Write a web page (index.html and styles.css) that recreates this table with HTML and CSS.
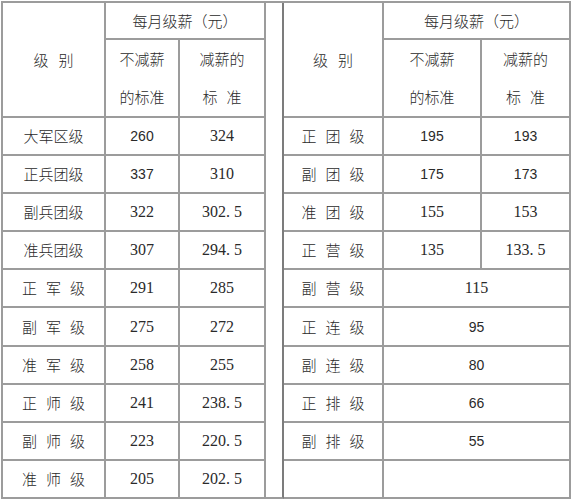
FILE: index.html
```html
<!DOCTYPE html>
<html lang="zh">
<head>
<meta charset="utf-8">
<title>军队级薪标准</title>
<link rel="stylesheet" href="styles.css">
</head>
<body>
<div class="wrap">
<table class="pay">
  <colgroup>
    <col class="c1"><col class="c2"><col class="c3"><col class="cg"><col class="c5"><col class="c6"><col class="c7">
  </colgroup>
  <tr class="r-top">
    <td rowspan="2"><span class="sp10">级别</span></td>
    <td colspan="2" class="h37">每月级薪（元）</td>
    <td rowspan="12" class="gap"></td>
    <td rowspan="2"><span class="sp10">级别</span></td>
    <td colspan="2" class="h37">每月级薪（元）</td>
  </tr>
  <tr class="r-sub">
    <td class="two">不减薪<br>的标准</td>
    <td class="two">减薪的<br><span class="sp9">标准</span></td>
    <td class="two">不减薪<br>的标准</td>
    <td class="two">减薪的<br><span class="sp9">标准</span></td>
  </tr>
  <tr class="row">
    <td>大军区级</td><td class="sn">260</td><td class="mn">324</td>
    <td><span class="sp9">正团级</span></td><td class="sn">195</td><td class="sn">193</td>
  </tr>
  <tr class="row">
    <td>正兵团级</td><td class="sn">337</td><td class="mn">310</td>
    <td><span class="sp9">副团级</span></td><td class="sn">175</td><td class="sn">173</td>
  </tr>
  <tr class="row">
    <td>副兵团级</td><td class="mn">322</td><td class="mn">302<span class="dot">.</span>5</td>
    <td><span class="sp9">准团级</span></td><td class="mn">155</td><td class="mn">153</td>
  </tr>
  <tr class="row">
    <td>准兵团级</td><td class="mn">307</td><td class="mn">294<span class="dot">.</span>5</td>
    <td><span class="sp9">正营级</span></td><td class="mn">135</td><td class="mn">133<span class="dot">.</span>5</td>
  </tr>
  <tr class="row">
    <td><span class="sp9">正军级</span></td><td class="mn">291</td><td class="mn">285</td>
    <td><span class="sp9">副营级</span></td><td colspan="2" class="mn">115</td>
  </tr>
  <tr class="row tall">
    <td><span class="sp9">副军级</span></td><td class="mn">275</td><td class="mn">272</td>
    <td><span class="sp9">正连级</span></td><td colspan="2" class="sn">95</td>
  </tr>
  <tr class="row">
    <td><span class="sp9">准军级</span></td><td class="mn">258</td><td class="mn">255</td>
    <td><span class="sp9">副连级</span></td><td colspan="2" class="sn">80</td>
  </tr>
  <tr class="row">
    <td><span class="sp9">正师级</span></td><td class="mn">241</td><td class="mn">238<span class="dot">.</span>5</td>
    <td><span class="sp9">正排级</span></td><td colspan="2" class="sn">66</td>
  </tr>
  <tr class="row">
    <td><span class="sp9">副师级</span></td><td class="mn">223</td><td class="mn">220<span class="dot">.</span>5</td>
    <td><span class="sp9">副排级</span></td><td colspan="2" class="sn">55</td>
  </tr>
  <tr class="row">
    <td><span class="sp9">准师级</span></td><td class="mn">205</td><td class="mn">202<span class="dot">.</span>5</td>
    <td></td><td colspan="2"></td>
  </tr>
</table>
</div>
</body>
</html>
```

FILE: styles.css
```css
body {
  margin: 0;
  background: #ffffff;
}

.wrap {
  padding: 1px 0 0 1px;
}

.pay {
  border-collapse: separate;
  border-spacing: 0;
  table-layout: fixed;
  width: 570px;
  border-top: 2px solid #9c9c9c;
  border-left: 2px solid #9c9c9c;
  font-family: "Noto Sans CJK SC", "Noto Sans", sans-serif;
  font-weight: 300;
  font-size: 15px;
  color: #2a2a2a;
}

.c1 { width: 103px; }
.c2 { width: 74px; }
.c3 { width: 86px; }
.cg { width: 18px; }
.c5 { width: 100px; }
.c6 { width: 98px; }
.c7 { width: 89px; }

.pay td {
  box-sizing: border-box;
  border-right: 2px solid #9c9c9c;
  border-bottom: 2px solid #9c9c9c;
  padding: 0;
  text-align: center;
  vertical-align: middle;
  line-height: 20px;
}

.pay td.gap {
  border-right-color: #7c7c7c;
  background: #ffffff;
}

.h37 { height: 37px; }

.pay td.two {
  height: 78px;
  line-height: 38px;
}

.row td { height: 38px; }
.row.tall td { height: 39px; }

.sp10 {
  letter-spacing: 10px;
  margin-right: -10px;
}

.sp9 {
  letter-spacing: 9px;
  margin-right: -9px;
}

.sn {
  font-family: "Liberation Sans", Arial, sans-serif;
  font-weight: 400;
  font-size: 14px;
}

.mn {
  font-family: "Liberation Serif", "Times New Roman", serif;
  font-weight: 400;
  font-size: 16px;
}

.dot {
  display: inline-block;
  width: 8px;
  text-align: left;
}
```
